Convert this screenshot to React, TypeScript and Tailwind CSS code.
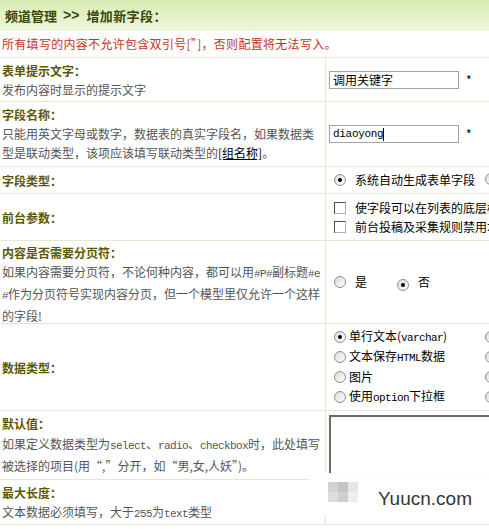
import React from "react";

const M = ({ children }: { children: React.ReactNode }) => (
  <span className="font-['Liberation_Mono',monospace] text-[11px] tracking-[-0.6px]">{children}</span>
);

const Radio = ({ checked }: { checked?: boolean }) => (
  <span className="inline-flex w-[12px] h-[12px] shrink-0 rounded-full border border-[#8d8f90] bg-gradient-to-br from-[#dcdcd8] to-white items-center justify-center">
    {checked && <span className="w-[4px] h-[4px] rounded-full bg-black" />}
  </span>
);

const Check = () => (
  <span className="inline-block w-[12px] h-[12px] shrink-0 border border-t-[#505050] border-l-[#505050] border-r-[#b0b0b0] border-b-[#b0b0b0] bg-white" />
);

const Label = ({ children }: { children: React.ReactNode }) => (
  <div className="font-bold text-[#5b5900] leading-[19px]">{children}</div>
);

export default function App() {
  return (
    <div className="relative w-[489px] h-[529px] overflow-hidden bg-white font-['Noto_Sans_CJK_SC','Liberation_Sans',sans-serif] text-[12px]">
      <div className="w-[720px]">
        <div className="h-[31px] bg-gradient-to-b from-[#d9ecb4] to-[#edf6dc] flex items-center pl-[5px] text-[13px] font-bold text-[#3b4708] whitespace-nowrap">
          <span>频道管理</span>
          <span className="ml-[6px] mr-[7px] font-['Liberation_Sans',sans-serif] text-[14px]">&gt;&gt;</span>
          <span className="tracking-[0.4px]">增加新字段：</span>
        </div>
        <div className="h-[27px] border-b border-[#e8e7d3] flex items-center pl-[2px] text-[#c4341c] whitespace-nowrap tracking-[0.3px]">
          所有填写的内容不允许包含双引号[”]，否则配置将无法写入。
        </div>

        {/* Row 1 */}
        <div className="h-[44px] flex border-b border-[#e8e7d3]">
          <div className="w-[326px] shrink-0 border-r border-[#e8e7d3] pl-[2px] pt-[3px] whitespace-nowrap">
            <Label>表单提示文字：</Label>
            <div className="text-[#555] leading-[19px]">发布内容时显示的提示文字</div>
          </div>
          <div className="flex-1 pl-[3px] flex items-center">
            <div className="w-[130px] h-[18px] border border-[#a2a2a2] flex items-center pl-[3px] text-black">调用关键字</div>
            <span className="ml-[7px] text-black">*</span>
          </div>
        </div>

        {/* Row 2 */}
        <div className="h-[65px] flex border-b border-[#e8e7d3]">
          <div className="w-[326px] shrink-0 border-r border-[#e8e7d3] pl-[2px] pt-[3px] whitespace-nowrap">
            <Label>字段名称：</Label>
            <div className="text-[#555] leading-[19px]">
              只能用英文字母或数字，数据表的真实字段名，如果数据类
              <br />
              型是联动类型，该项应该填写联动类型的<span className="text-black underline">[组名称]</span>。
            </div>
          </div>
          <div className="flex-1 pl-[3px] flex items-center">
            <div className="w-[130px] h-[18px] border border-[#a2a2a2] flex items-center pl-[3px] text-black">
              <span className="font-['Liberation_Mono',monospace] text-[11px] tracking-[-0.3px]">diaoyong</span>
              <span className="w-[1px] h-[13px] bg-black" />
            </div>
            <span className="ml-[7px] text-black">*</span>
          </div>
        </div>

        {/* Row 3 */}
        <div className="h-[27px] flex border-b border-[#e8e7d3]">
          <div className="w-[326px] shrink-0 border-r border-[#e8e7d3] pl-[2px] flex items-center">
            <Label>字段类型：</Label>
          </div>
          <div className="flex-1 pl-[8px] flex items-center whitespace-nowrap text-black">
            <Radio checked />
            <span className="ml-[9px]">系统自动生成表单字段</span>
            <span className="ml-[10px]"><Radio /></span>
            <span className="ml-[9px]">自定义表单字段</span>
          </div>
        </div>

        {/* Row 4 */}
        <div className="h-[47px] flex border-b border-[#e8e7d3]">
          <div className="w-[326px] shrink-0 border-r border-[#e8e7d3] pl-[2px] flex items-center">
            <Label>前台参数：</Label>
          </div>
          <div className="flex-1 pl-[8px] flex flex-col justify-center whitespace-nowrap text-black">
            <div className="h-[19px] flex items-center">
              <Check />
              <span className="ml-[9px]">使字段可以在列表的底层模板中调用</span>
            </div>
            <div className="h-[19px] flex items-center">
              <Check />
              <span className="ml-[9px]">前台投稿及采集规则禁用本字段</span>
            </div>
          </div>
        </div>

        {/* Row 5 */}
        <div className="h-[83px] flex border-b border-[#e8e7d3]">
          <div className="w-[326px] shrink-0 border-r border-[#e8e7d3] pl-[2px] pt-[2px] whitespace-nowrap">
            <Label>内容是否需要分页符：</Label>
            <div className="text-[#555] leading-[19px]">
              如果内容需要分页符，不论何种内容，都可以用<M>#P#</M>副标题<M>#e</M>
              <br />
              <M>#</M>作为分页符号实现内容分页，但一个模型里仅允许一个这样
              <br />
              的字段!
            </div>
          </div>
          <div className="flex-1 pl-[8px] flex items-center whitespace-nowrap text-black">
            <Radio />
            <span className="ml-[9px]">是</span>
            <span className="ml-[30px]"><Radio checked /></span>
            <span className="ml-[9px]">否</span>
          </div>
        </div>

        {/* Row 6 */}
        <div className="h-[87px] flex border-b border-[#e8e7d3]">
          <div className="w-[326px] shrink-0 border-r border-[#e8e7d3] pl-[2px] flex items-center">
            <Label>数据类型：</Label>
          </div>
          <div className="flex-1 pl-[8px] flex items-center whitespace-nowrap text-black">
            <div className="grid grid-cols-[151px_151px] auto-rows-[20px]">
              <div className="flex items-center"><Radio checked /><span className="ml-[3px]">单行文本(<M>varchar</M>)</span></div>
              <div className="flex items-center"><Radio /><span className="ml-[3px]">多行文本(<M>text</M>)</span></div>
              <div className="flex items-center"><Radio /><span className="ml-[3px]">文本保存<M>HTML</M>数据</span></div>
              <div className="flex items-center"><Radio /><span className="ml-[3px]">下拉列表</span></div>
              <div className="flex items-center"><Radio /><span className="ml-[3px]">图片</span></div>
              <div className="flex items-center"><Radio /><span className="ml-[3px]">附件</span></div>
              <div className="flex items-center"><Radio /><span className="ml-[3px]">使用<M>option</M>下拉框</span></div>
              <div className="flex items-center"><Radio /><span className="ml-[3px]">日期时间</span></div>
            </div>
          </div>
        </div>

        {/* Row 7 */}
        <div className="h-[69px] flex border-b border-[#e8e7d3]">
          <div className="w-[326px] shrink-0 border-r border-[#e8e7d3] pl-[2px] pt-[3px] whitespace-nowrap leading-[20px]">
            <div className="font-bold text-[#5b5900]">默认值：</div>
            <div className="text-[#555]">
              如果定义数据类型为<M>select</M>、<M>radio</M>、<M>checkbox</M>时，此处填写
              <br />
              被选择的项目(用“,”分开，如“男,女,人妖”)。
            </div>
          </div>
          <div className="flex-1 pl-[3px] pt-[4px]">
            <div className="w-[320px] h-[60px] border-2 border-t-[#6a6a6a] border-l-[#6a6a6a] border-r-[#dcdcdc] border-b-[#dcdcdc] bg-white" />
          </div>
        </div>

        {/* Row 8 */}
        <div className="h-[45px] flex border-b border-[#e8e7d3]">
          <div className="w-[326px] shrink-0 border-r border-[#e8e7d3] pl-[2px] pt-[3px] whitespace-nowrap">
            <Label>最大长度：</Label>
            <div className="text-[#555] leading-[19px]">文本数据必须填写，大于<M>255</M>为<M>text</M>类型</div>
          </div>
          <div className="flex-1" />
        </div>
      </div>

      {/* watermark */}
      <div className="absolute left-[310px] top-[473px] w-[179px] h-[42px] bg-[rgba(255,255,255,0.9)]">
        <div className="absolute left-[18px] top-[9px] grid grid-cols-[10px_10px_10px] grid-rows-[10px_10px]">
          <div className="bg-[#d2d2d2]" />
          <div className="bg-[#c4c4c4]" />
          <div className="bg-[#e6e6e6]" />
          <div className="bg-[#dcdcdc]" />
          <div className="bg-[#cfcfcf]" />
          <div className="bg-[#eeeeee]" />
        </div>
        <div className="absolute left-[68px] top-[15px] font-['Liberation_Sans',sans-serif] text-[19px] leading-[22px] text-[#363636]">
          Yuucn.com
        </div>
      </div>
    </div>
  );
}
